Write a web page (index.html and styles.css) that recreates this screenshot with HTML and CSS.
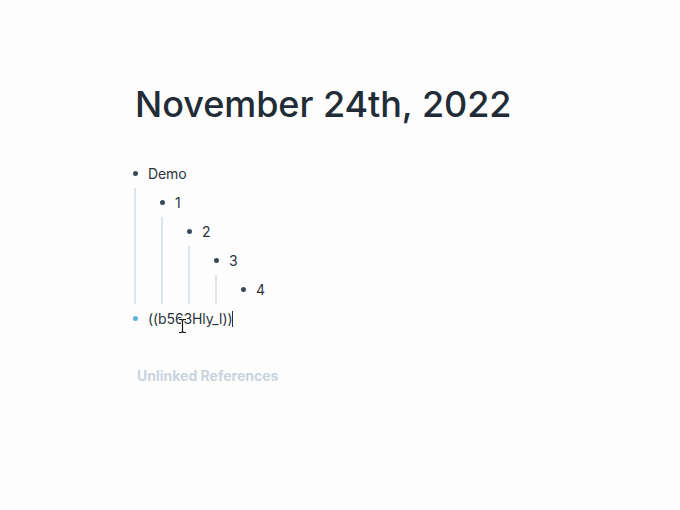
FILE: index.html
```html
<!DOCTYPE html>
<html>
<head>
<meta charset="utf-8">
<link rel="stylesheet" href="styles.css">
</head>
<body>
<div class="page">
  <h1 class="title">November 24th, 2022</h1>
  <div class="blocks">
    <div class="block">
      <div class="row"><span class="bullet-col"><span class="dot"></span></span><span class="text">Demo</span></div>
      <div class="children">
        <div class="block">
          <div class="row"><span class="bullet-col"><span class="dot"></span></span><span class="text">1</span></div>
          <div class="children">
            <div class="block">
              <div class="row"><span class="bullet-col"><span class="dot"></span></span><span class="text">2</span></div>
              <div class="children">
                <div class="block">
                  <div class="row"><span class="bullet-col"><span class="dot"></span></span><span class="text">3</span></div>
                  <div class="children">
                    <div class="block">
                      <div class="row"><span class="bullet-col"><span class="dot"></span></span><span class="text">4</span></div>
                    </div>
                  </div>
                </div>
              </div>
            </div>
          </div>
        </div>
      </div>
    </div>
    <div class="block editing">
      <div class="row"><span class="bullet-col"><span class="dot blue"></span></span><span class="text">((b563Hly_l))<span class="caret"></span></span>
        <svg class="ibeam" width="9" height="16" viewBox="0 0 9 16"><path d="M1 1.5h2.5l1 1 1-1H8M4.5 2.5v11M1 14.5h2.5l1-1 1 1H8" fill="none" stroke="#ffffff" stroke-width="3"/><path d="M1 1.5h2.5l1 1 1-1H8M4.5 2.5v11M1 14.5h2.5l1-1 1 1H8" fill="none" stroke="#111" stroke-width="1.2"/></svg>
      </div>
    </div>
  </div>
  <div class="refs">Unlinked References</div>
</div>
</body>
</html>
```
FILE: styles.css
```css
html, body {
  margin: 0;
  padding: 0;
  background: #fdfdfd;
}
body {
  font-family: Inter, "Noto Sans", sans-serif;
  color: #262f38;
  width: 680px;
  height: 510px;
  overflow: hidden;
}
.page {
  padding: 82px 0 0 127px;
}
.title {
  margin: 0 0 0 8px;
  font-size: 36px;
  font-weight: 500;
  line-height: 44px;
  color: #222c36;
  letter-spacing: -0.05px;
}
.blocks {
  margin-top: 33px;
}
.row {
  position: relative;
  display: flex;
  align-items: center;
  height: 29px;
}
.bullet-col {
  width: 16px;
  height: 29px;
  display: flex;
  align-items: center;
  justify-content: center;
  margin-right: 5px;
}
.dot {
  width: 5px;
  height: 5px;
  border-radius: 50%;
  background: #3b4a58;
}
.dot.blue {
  background: #5eb3dc;
}
.text {
  font-size: 14px;
  color: #2a333c;
  display: flex;
  align-items: center;
  letter-spacing: -0.1px;
}
.children {
  margin-left: 7px;
  border-left: 2px solid #dde4ea;
  padding-left: 18px;
}
.caret {
  display: inline-block;
  width: 1px;
  height: 16px;
  background: #262f38;
  margin-left: 0;
}
.ibeam {
  position: absolute;
  left: 51px;
  top: 14px;
}
.refs {
  margin: 34px 0 0 10px;
  font-size: 14px;
  font-weight: 700;
  color: #cad4dd;
}
```
